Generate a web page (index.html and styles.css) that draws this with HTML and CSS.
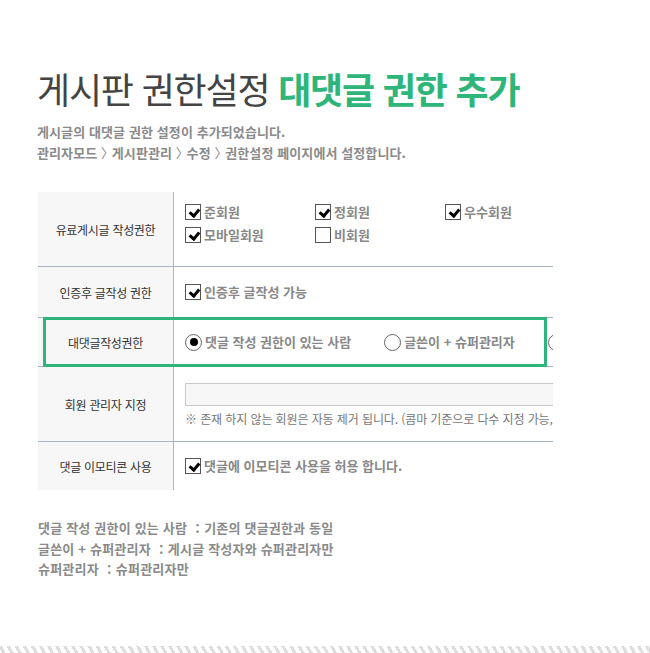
FILE: index.html
```html
<!DOCTYPE html>
<html lang="ko">
<head>
<meta charset="UTF-8" />
<meta name="viewport" content="width=device-width, initial-scale=1" />
<title>게시판 권한설정 - 대댓글 권한 추가</title>
<link rel="stylesheet" href="styles.css">
</head>
<body>

<div class="page">
  <h1 class="title">게시판 권한설정 <strong>대댓글 권한 추가</strong></h1>
  <p class="desc">게시글의 대댓글 권한 설정이 추가되었습니다.<br>관리자모드 <span class="gt">〉</span> 게시판관리 <span class="gt">〉</span> 수정 <span class="gt">〉</span> 권한설정 페이지에서 설정합니다.</p>

  <!-- 권한설정 표 -->
  <div class="board">
    <div class="row row-tall">
      <div class="label">유료게시글 작성권한</div>
      <div class="field">
        <div class="opts">
          <span class="opt"><i class="chk on"></i>준회원</span>
          <span class="opt"><i class="chk on"></i>정회원</span>
          <span class="opt"><i class="chk on"></i>우수회원</span>
          <span class="opt"><i class="chk on"></i>모바일회원</span>
          <span class="opt"><i class="chk"></i>비회원</span>
        </div>
      </div>
    </div>

    <div class="row row-auth">
      <div class="label">인증후 글작성 권한</div>
      <div class="field field-mid">
        <span class="opt"><i class="chk on"></i>인증후 글작성 가능</span>
      </div>
    </div>

    <div class="row row-new">
      <div class="label">대댓글작성권한</div>
      <div class="field field-mid">
        <span class="opt radio-opt"><i class="radio on"></i>댓글 작성 권한이 있는 사람</span>
        <span class="opt radio-opt"><i class="radio"></i>글쓴이 + 슈퍼관리자</span>
        <span class="opt radio-opt"><i class="radio"></i>슈퍼관리자</span>
      </div>
      <div class="highlight"></div>
    </div>

    <div class="row row-tall">
      <div class="label">회원 관리자 지정</div>
      <div class="field field-input">
        <input type="text" class="text-input">
        <p class="note">※ 존재 하지 않는 회원은 자동 제거 됩니다. (콤마 기준으로 다수 지정 가능, 예: 회원아이디1,회원아이디2)</p>
      </div>
    </div>

    <div class="row row-last">
      <div class="label">댓글 이모티콘 사용</div>
      <div class="field field-mid">
        <span class="opt"><i class="chk on"></i>댓글에 이모티콘 사용을 허용 합니다.</span>
      </div>
    </div>
  </div>

  <!-- 옵션 설명 -->
  <ul class="notes">
    <li>댓글 작성 권한이 있는 사람 ：기존의 댓글권한과 동일</li>
    <li>글쓴이 + 슈퍼관리자 ：게시글 작성자와 슈퍼관리자만</li>
    <li>슈퍼관리자 ：슈퍼관리자만</li>
  </ul>
</div>

<div class="stripe"></div>

</body>
</html>
```

FILE: styles.css
```css
/* 기본 */
* {
  margin: 0;
  padding: 0;
  box-sizing: border-box;
}
body {
  font-family: "Noto Sans CJK KR", "Noto Sans", sans-serif;
  background: #fff;
  color: #333;
  width: 650px;
  height: 653px;
  overflow: hidden;
  position: relative;
}

.page {
  padding: 62px 0 0 37px;
}

/* 제목 */
.title {
  font-size: 36px;
  font-weight: 400;
  color: #444;
  letter-spacing: -1.2px;
  line-height: 52px;
}
.title strong {
  color: #2db57a;
  font-weight: 700;
}

.desc {
  margin-top: 7px;
  font-size: 13px;
  font-weight: 700;
  color: #8a8a8a;
  line-height: 21px;
  letter-spacing: 0.1px;
}
.desc .gt {
  font-weight: 400;
  letter-spacing: -6px;
}

/* 표 */
.board {
  margin: 29px 0 0 1px;
  width: 515px;
  overflow: hidden;
}
.row {
  display: flex;
  position: relative;
  border-bottom: 1px solid #a9b3c1;
}
.row-last {
  border-bottom: none;
}
.row-tall { height: 75px; }
.row-auth { height: 51px; }
.row-new { height: 49px; }
.row-last { height: 48px; }

.label {
  width: 136px;
  flex-shrink: 0;
  background: #f7f7f7;
  border-right: 1px solid #a7b6cc;
  display: flex;
  align-items: center;
  justify-content: center;
  font-size: 12px;
  color: #333;
  letter-spacing: -0.3px;
}
.field {
  flex: 1;
  padding: 12px 0 0 11px;
  min-width: 0;
}
.field-mid {
  display: flex;
  align-items: center;
  padding-top: 0;
  white-space: nowrap;
}

.opts {
  display: grid;
  grid-template-columns: repeat(3, 130px);
  row-gap: 7px;
}
.opt {
  display: inline-flex;
  align-items: center;
  font-size: 13px;
  font-weight: 700;
  color: #888;
  line-height: 16px;
}

/* 체크박스 */
.chk {
  width: 16px;
  height: 16px;
  border: 1px solid #555;
  background: #fff;
  margin-right: 3px;
  flex-shrink: 0;
  position: relative;
}
.chk.on::after {
  content: "";
  position: absolute;
  left: 5px;
  top: 2px;
  width: 4px;
  height: 7px;
  border-right: 3px solid #000;
  border-bottom: 3px solid #000;
  transform: rotate(40deg);
}

/* 라디오 */
.radio-opt {
  margin-right: 33px;
}
.radio {
  width: 17px;
  height: 17px;
  border: 1px solid #666;
  border-radius: 50%;
  background: #fff;
  margin-right: 3px;
  flex-shrink: 0;
  position: relative;
}
.radio.on::after {
  content: "";
  position: absolute;
  left: 3.5px;
  top: 3.5px;
  width: 8px;
  height: 8px;
  border-radius: 50%;
  background: #000;
}

/* 강조 테두리 */
.highlight {
  position: absolute;
  top: -1px;
  left: 5px;
  width: 504px;
  height: 50px;
  border: 3px solid #2db57a;
  pointer-events: none;
}

/* 입력 */
.field-input {
  padding-top: 16px;
  white-space: nowrap;
}
.text-input {
  display: block;
  width: 420px;
  height: 23px;
  background: #f7f7f7;
  border: 1px solid #c8c8c8;
}
.note {
  margin-top: 5px;
  font-size: 12px;
  color: #777;
  letter-spacing: -0.1px;
  line-height: 16px;
}

/* 설명 */
.notes {
  list-style: none;
  margin: 28px 0 0 1px;
  font-size: 13px;
  font-weight: 700;
  color: #8a8a8a;
  line-height: 20.5px;
  letter-spacing: 0.2px;
}

/* 하단 줄무늬 */
.stripe {
  position: absolute;
  left: 0;
  right: 0;
  bottom: 0;
  height: 7px;
  background: repeating-linear-gradient(60deg, #fff 0 2px, #ddd 2px 5px, #fff 5px 7px);
}
```
